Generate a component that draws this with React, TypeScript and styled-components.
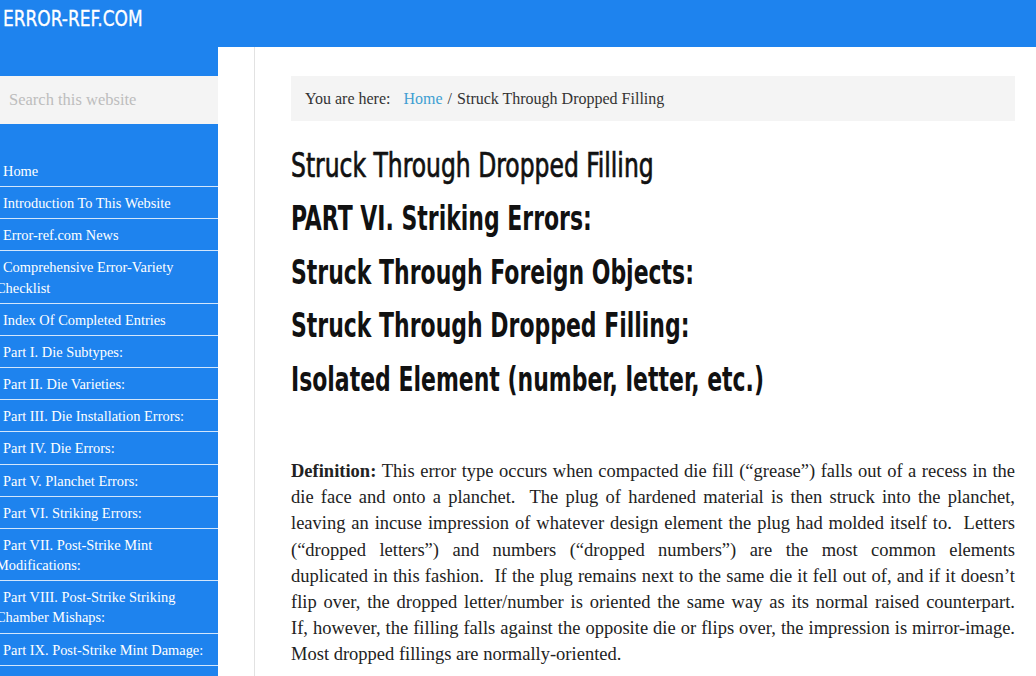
import React from "react"
import styled, { createGlobalStyle } from "styled-components"

const Blue = "#1e83ee"
const Serif = `"Liberation Serif", "Times New Roman", serif`
const Narrow = `"Liberation Sans Narrow", "DejaVu Sans Condensed", "Arial Narrow", sans-serif`

const GlobalStyle = createGlobalStyle`
  html, body {
    margin: 0;
    padding: 0;
  }
  body {
    background: ${Blue};
    font-family: ${Serif};
    overflow: hidden;
  }
`

const menu = [
  "Home",
  "Introduction To This Website",
  "Error-ref.com News",
  "Comprehensive Error-Variety\nChecklist",
  "Index Of Completed Entries",
  "Part I. Die Subtypes:",
  "Part II. Die Varieties:",
  "Part III. Die Installation Errors:",
  "Part IV. Die Errors:",
  "Part V. Planchet Errors:",
  "Part VI. Striking Errors:",
  "Part VII. Post-Strike Mint\nModifications:",
  "Part VIII. Post-Strike Striking\nChamber Mishaps:",
  "Part IX. Post-Strike Mint Damage:",
  "Part X. Miscellaneous:",
]

const subheads = [
  "PART VI. Striking Errors:",
  "Struck Through Foreign Objects:",
  "Struck Through Dropped Filling:",
  "Isolated Element (number, letter, etc.)",
]

// the definition is set line by line so each line justifies to the column edge
const definition = [
  "This error type occurs when compacted die fill (\u201cgrease\u201d) falls out of a recess in the",
  "die face and onto a planchet.  The plug of hardened material is then struck into the planchet,",
  "leaving an incuse impression of whatever design element the plug had molded itself to.  Letters",
  "(\u201cdropped letters\u201d) and numbers (\u201cdropped numbers\u201d) are the most common elements",
  "duplicated in this fashion.  If the plug remains next to the same die it fell out of, and if it doesn\u2019t",
  "flip over, the dropped letter/number is oriented the same way as its normal raised counterpart.",
  "If, however, the filling falls against the opposite die or flips over, the impression is mirror-image.",
  "Most dropped fillings are normally-oriented.",
]

export default function App() {
  return (
    <S.Page>
      <GlobalStyle />
      <S.Header>
        <S.Logo href="#">
          <S.Squeeze $x={0.9}>ERROR-REF.COM</S.Squeeze>
        </S.Logo>
      </S.Header>
      <S.Body>
        <S.Sidebar>
          <S.Search placeholder="Search this website" />
          <S.Menu>
            {menu.map(label => (
              <S.MenuItem key={label} href="#">
                {label}
              </S.MenuItem>
            ))}
          </S.Menu>
        </S.Sidebar>
        <S.Main>
          <S.Content>
            <S.Breadcrumb>
              You are here:
              <S.Crumb href="#">Home</S.Crumb>
              <S.Sep>/</S.Sep>
              Struck Through Dropped Filling
            </S.Breadcrumb>
            <S.Title>
              <S.Squeeze $x={0.79}>Struck Through Dropped Filling</S.Squeeze>
            </S.Title>
            <S.Subheads>
              {subheads.map(line => (
                <S.Subhead key={line}>
                  <S.Squeeze $x={0.74}>{line}</S.Squeeze>
                </S.Subhead>
              ))}
            </S.Subheads>
            <S.Definition>
              {definition.map((line, i) => (
                <S.Line key={i} $last={i === definition.length - 1}>
                  {i === 0 && <strong>Definition: </strong>}
                  {line}
                </S.Line>
              ))}
            </S.Definition>
          </S.Content>
        </S.Main>
      </S.Body>
    </S.Page>
  )
}

const S = {
  Page: styled.div`
    min-height: 100vh;
    display: flex;
    flex-direction: column;
  `,
  Header: styled.header`
    height: 47px;
    padding-left: 3px;
  `,
  Logo: styled.a`
    display: block;
    font-family: ${Narrow};
    font-size: 21px;
    line-height: 39px;
    color: #fff;
    text-decoration: none;
    -webkit-text-stroke: 0.3px #fff;
  `,
  Squeeze: styled.span<{ $x: number }>`
    display: inline-block;
    white-space: nowrap;
    transform: scaleX(${({ $x }) => $x});
    transform-origin: left center;
  `,
  Body: styled.div`
    flex: 1;
    display: flex;
  `,
  Sidebar: styled.aside`
    width: 218px;
    flex-shrink: 0;
    padding-top: 29px;
  `,
  Search: styled.input`
    display: block;
    box-sizing: border-box;
    width: 218px;
    height: 48px;
    margin: 0;
    padding: 0 9px;
    border: 0;
    background: #f4f4f4;
    font-family: ${Serif};
    font-size: 16.5px;
    color: #333;
    outline: none;
    &::placeholder {
      color: #bdbdbd;
    }
  `,
  Menu: styled.nav`
    margin-top: 31px;
    display: flex;
    flex-direction: column;
  `,
  MenuItem: styled.a`
    display: block;
    margin-left: -4px;
    padding: 6px 0 5px;
    text-indent: 7px;
    border-bottom: 1px solid rgba(255, 255, 255, 0.8);
    font-size: 14.4px;
    line-height: 20.15px;
    color: #fff;
    text-decoration: none;
    white-space: pre-line;
  `,
  Main: styled.main`
    flex: 1;
    background: #fff;
    padding: 0 21px 0 36px;
    display: flex;
  `,
  Content: styled.div`
    flex: 1;
    border-left: 1px solid #e2e2e2;
    padding: 29px 0 0 36px;
  `,
  Breadcrumb: styled.div`
    height: 45px;
    display: flex;
    align-items: center;
    padding: 0 14px;
    background: #f4f4f4;
    font-size: 16px;
    color: #333;
    white-space: pre;
  `,
  Crumb: styled.a`
    margin-left: 13px;
    color: #3f9fd2;
    text-decoration: none;
  `,
  Sep: styled.span`
    margin: 0 5px;
  `,
  Title: styled.h1`
    margin: 19px 0 0;
    font-family: ${Narrow};
    font-weight: 400;
    font-size: 33px;
    line-height: 52px;
    color: #111;
    -webkit-text-stroke: 0.7px #111;
  `,
  Subheads: styled.div`
    display: flex;
    flex-direction: column;
  `,
  Subhead: styled.h2`
    margin: 0;
    font-family: ${Narrow};
    font-weight: 700;
    font-size: 33px;
    line-height: 53.5px;
    color: #111;
  `,
  Definition: styled.p`
    margin: 52px 0 0;
    font-size: 18.5px;
    line-height: 26.2px;
    color: #222;
    text-align: justify;
    strong {
      font-weight: 700;
    }
  `,
  Line: styled.span<{ $last: boolean }>`
    display: block;
    white-space: pre-wrap;
    text-align-last: ${({ $last }) => ($last ? "left" : "justify")};
  `,
}
